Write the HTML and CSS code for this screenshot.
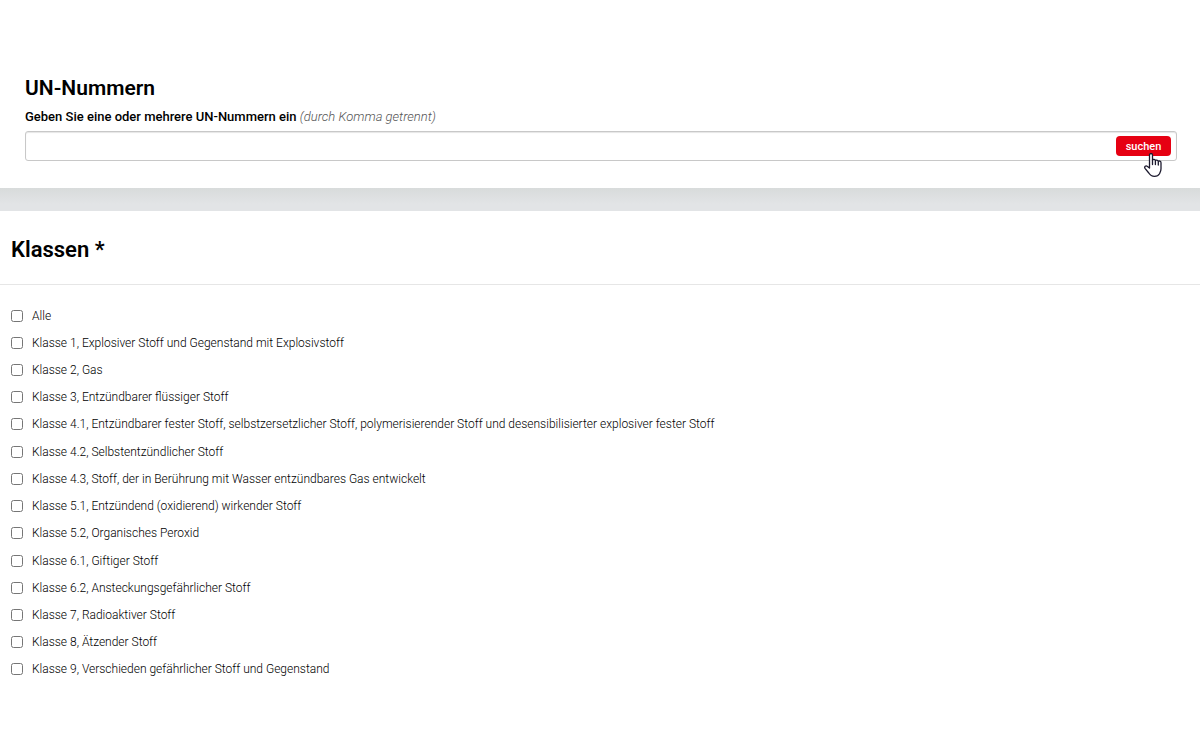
FILE: index.html
```html
<!DOCTYPE html>
<html lang="de">
<head>
    <meta charset="UTF-8">
    <meta name="viewport" content="width=device-width, initial-scale=1.0">
    <title>UN-Nummern</title>
    <link rel="stylesheet" href="styles.css">
</head>
<body>
    <section class="search">
        <h2>UN-Nummern</h2>
        <form action="#">
            <label class="searchlabel" for="unnr">Geben Sie eine oder mehrere UN-Nummern ein <em>(durch Komma getrennt)</em></label>
            <div class="searchbox">
                <input class="frm" type="text" id="unnr" name="unnr">
                <button class="btn" type="submit">suchen</button>
                <svg class="hand" viewBox="0 0 18 24" aria-hidden="true">
                    <path d="M5.500 15V2.200c0-2.200 3-2.200 3 0v5c.4-1.200 2.700-1 2.900.5.500-1 2.600-.8 2.900.8.600-.9 2.700-.5 2.700 1.200v6c0 2.500-1 3.500-1.500 5-1 1.800-2.300 2.600-5 2.600-3 0-4.500-1.300-5.700-3.300L1 15.300c-1-1.800.8-3.200 2.500-1.900z" fill="#fff" stroke="#1c1a2e" stroke-width="1.300" stroke-linejoin="round"/>
                    <path d="M8.500 7V11.500M11.400 8V11.500M14.300 9V12" fill="none" stroke="#1c1a2e" stroke-width="1.300" stroke-linecap="round"/>
                </svg>
            </div>
        </form>
    </section>
    <div class="spacer"></div>
    <section class="classes">
        <h2>Klassen *</h2>
        <ul>
            <li><input type="checkbox" id="k0"><label for="k0">Alle</label></li>
            <li><input type="checkbox" id="k1"><label for="k1">Klasse 1, Explosiver Stoff und Gegenstand mit Explosivstoff</label></li>
            <li><input type="checkbox" id="k2"><label for="k2">Klasse 2, Gas</label></li>
            <li><input type="checkbox" id="k3"><label for="k3">Klasse 3, Entzündbarer flüssiger Stoff</label></li>
            <li><input type="checkbox" id="k41"><label for="k41">Klasse 4.1, Entzündbarer fester Stoff, selbstzersetzlicher Stoff, polymerisierender Stoff und desensibilisierter explosiver fester Stoff</label></li>
            <li><input type="checkbox" id="k42"><label for="k42">Klasse 4.2, Selbstentzündlicher Stoff</label></li>
            <li><input type="checkbox" id="k43"><label for="k43">Klasse 4.3, Stoff, der in Berührung mit Wasser entzündbares Gas entwickelt</label></li>
            <li><input type="checkbox" id="k51"><label for="k51">Klasse 5.1, Entzündend (oxidierend) wirkender Stoff</label></li>
            <li><input type="checkbox" id="k52"><label for="k52">Klasse 5.2, Organisches Peroxid</label></li>
            <li><input type="checkbox" id="k61"><label for="k61">Klasse 6.1, Giftiger Stoff</label></li>
            <li><input type="checkbox" id="k62"><label for="k62">Klasse 6.2, Ansteckungsgefährlicher Stoff</label></li>
            <li><input type="checkbox" id="k7"><label for="k7">Klasse 7, Radioaktiver Stoff</label></li>
            <li><input type="checkbox" id="k8"><label for="k8">Klasse 8, Ätzender Stoff</label></li>
            <li><input type="checkbox" id="k9"><label for="k9">Klasse 9, Verschieden gefährlicher Stoff und Gegenstand</label></li>
        </ul>
    </section>
</body>
</html>
```
FILE: styles.css
```css
body{
    margin: 0;
    font-family: Roboto, Arial, sans-serif;
    font-size: 12px;
    color: #000;
    background: #fff;
}
h2{
    margin: 0;
    font-weight: 600;
}
.search{
    padding: 74px 23px 27px 25px;
}
.search h2{
    font-size: 21px;
    line-height: 28px;
}
.spacer{
    height: 23px;
    background: linear-gradient(#d8dbdb, #e2e4e6 70%);
}
.searchlabel{
    display: block;
    padding: 5px 0;
    font-size: 13px;
    font-weight: 500;
    line-height: 19px;
}
.searchlabel em{
    font-weight: 300;
    color: #555;
}
.searchbox{
    display: flex;
    position: relative;
}
.frm{
    width: 100%;
    height: 30px;
    padding: 4px 70px 4px 8px;
    border: 1px solid #c8c8c8;
    border-radius: 3px;
    box-sizing: border-box;
    font: inherit;
    box-shadow: inset 0 1px 1px rgba(0,0,0,0.1);
}
.btn{
    position: absolute;
    top: 5px;
    right: 6px;
    width: 55px;
    height: 20px;
    padding: 0;
    border: none;
    border-radius: 4px;
    background: #e60012;
    color: #fff;
    font-family: inherit;
    font-size: 11px;
    font-weight: 500;
    cursor: pointer;
}
.btn:hover{
    opacity: 0.8;
}
.hand{
    position: absolute;
    top: 22px;
    right: 15px;
    width: 18px;
    height: 24px;
    pointer-events: none;
}
.classes h2{
    padding: 23px 11px 19px;
    border-bottom: 1px solid #e6e6e6;
    font-size: 22px;
    line-height: 31px;
}
.classes ul{
    display: grid;
    grid-auto-rows: 1fr;
    min-height: 381px;
    margin: 0;
    padding: 17px 11px 60px;
    list-style: none;
}
.classes li{
    display: flex;
    align-items: center;
    gap: 9px;
}
.classes input{
    width: 12px;
    height: 12px;
    margin: 0;
}
.classes label{
    font-weight: 350;
}
```
